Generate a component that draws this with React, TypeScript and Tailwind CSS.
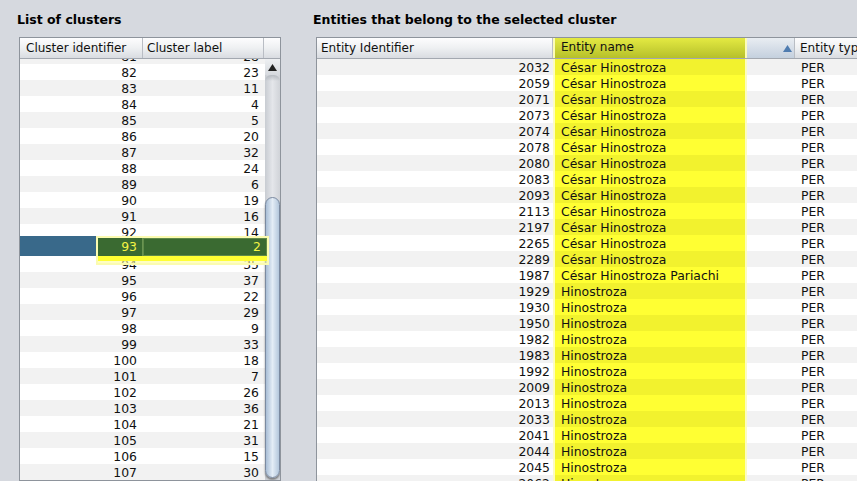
import React from 'react';

const clusters: [number, number][] = [
  [81, 28], [82, 23], [83, 11], [84, 4], [85, 5], [86, 20], [87, 32], [88, 24], [89, 6],
  [90, 19], [91, 16], [92, 14], [93, 2], [94, 35], [95, 37], [96, 22], [97, 29], [98, 9],
  [99, 33], [100, 18], [101, 7], [102, 26], [103, 36], [104, 21], [105, 31], [106, 15],
  [107, 30], [108, 12],
];

const cesar = [2032, 2059, 2071, 2073, 2074, 2078, 2080, 2083, 2093, 2113, 2197, 2265, 2289];
const hino = [1929, 1930, 1950, 1982, 1983, 1992, 2009, 2013, 2033, 2041, 2044, 2045, 2062];

const entities: [number, string][] = [
  ...cesar.map(id => [id, 'César Hinostroza'] as [number, string]),
  [1987, 'César Hinostroza Pariachi'],
  ...hino.map(id => [id, 'Hinostroza'] as [number, string]),
];

const headerBg = 'bg-gradient-to-b from-[#fdfdfe] via-[#eef0f2] to-[#d9dce1]';

const ClusterTable: React.FC = () => (
  <div className="w-[262px] border border-[#8e949c] bg-white">
    <div className={`flex h-[21px] border-b border-[#a3a8b0] text-[12px] ${headerBg}`}>
      <div className="w-[123px] border-r border-[#b9bdc4] pl-[6px] leading-[21px]">Cluster identifier</div>
      <div className="w-[121px] border-r border-[#b9bdc4] pl-[4px] leading-[21px]">Cluster label</div>
      <div className="flex-1" />
    </div>
    <div className="relative flex h-[421px] overflow-hidden">
      <div className="w-[245px]">
        <div className="-mt-[11px]">
          {clusters.map(([id, label], i) => {
            const sel = id === 93;
            return (
              <div
                key={id}
                className={`flex h-[16px] leading-[17px] ${sel ? 'bg-[#39698a]' : i % 2 === 0 ? 'bg-[#f2f2f2]' : 'bg-white'}`}
              >
                <div className="w-[123px] pr-[6px] text-right">{sel ? '' : id}</div>
                <div className="w-[122px] pr-[6px] text-right">{sel ? '' : label}</div>
              </div>
            );
          })}
        </div>
      </div>
      <div className="relative w-[15px] bg-gradient-to-r from-[#c8ccd2] via-[#e4e6ea] to-[#d0d3d8]">
        <div className="flex h-[16px] items-center justify-center bg-gradient-to-b from-[#eef0f2] to-[#d6d9de]">
          <svg width="9" height="7" viewBox="0 0 9 7">
            <path d="M4.5 0 L9 7 L0 7 Z" fill="#222" />
          </svg>
        </div>
        <div className="h-[6px] rounded-t-[6px] bg-gradient-to-b from-[#9aa0a8] to-transparent opacity-60" />
        <div className="absolute left-0 top-[138px] h-[281px] w-[15px] rounded-[8px] border border-[#7b8aa0] bg-gradient-to-r from-[#a9bed6] via-[#e4edf6] to-[#b4c7dc] shadow-[0_2px_2px_rgba(0,0,0,0.45)]" />
      </div>
      <div className="absolute left-[-1px] top-[177px] h-[20px] w-[77px] bg-[#39698a]" />
      <div className="absolute left-[76px] top-[177px] h-[29px] w-[173px] border-[2px] border-[#fbfbb0] bg-[#fdfd9a]/60">
        <div className="flex h-[18px] bg-[#3a6a31] leading-[18px] text-[#f4f444]">
          <div className="w-[45px] border-r border-[#6a9452] pr-[5px] text-right">93</div>
          <div className="flex-1 border border-[#5f8a48] pr-[5px] text-right leading-[16px]">2</div>
        </div>
        <div className="h-[5px] bg-[#ffff33]" />
      </div>
    </div>
  </div>
);

const EntityTable: React.FC = () => (
  <div className="w-[600px] border border-[#8e949c] bg-white">
    <div className={`flex h-[21px] border-b border-[#a3a8b0] text-[12px] ${headerBg}`}>
      <div className="w-[236px] border-r border-[#b9bdc4] pl-[4px] leading-[21px]">Entity Identifier</div>
      <div className="w-[194px] border-x-[2px] border-[#fcfcb8] bg-gradient-to-b from-[#e4ea42] to-[#b6c02a] pl-[6px] leading-[19px]">
        Entity name
      </div>
      <div className="flex w-[48px] items-center justify-end border-r border-[#b9bdc4] bg-gradient-to-b from-[#e9edf2] to-[#c4d0de] pr-[2px]">
        <svg width="9" height="7" viewBox="0 0 9 7">
          <path d="M4.5 0 L9 7 L0 7 Z" fill="#4f7cb0" />
        </svg>
      </div>
      <div className="flex-1 pl-[5px] leading-[21px]">Entity type</div>
    </div>
    <div className="h-[430px] overflow-hidden">
      {entities.map(([id, name], i) => {
        const odd = i % 2 === 0;
        return (
          <div key={id} className={`flex h-[16px] leading-[17px] ${odd ? 'bg-[#f2f2f2]' : 'bg-white'}`}>
            <div className="w-[236px] pr-[3px] text-right">{id}</div>
            <div
              className={`w-[194px] border-x-[2px] border-[#fcfcc0] pl-[6px] ${odd ? 'bg-[#f2f22e]' : 'bg-[#ffff33]'}`}
            >
              {name}
            </div>
            <div className="w-[48px]" />
            <div className="flex-1 pl-[6px]">PER</div>
          </div>
        );
      })}
    </div>
  </div>
);

export default function App() {
  return (
    <div
      className="flex h-[481px] w-[857px] overflow-hidden bg-[#d6d9df] text-[12.4px] text-[#111]"
      style={{ fontFamily: '"DejaVu Sans", sans-serif' }}
    >
      <div className="w-[281px] shrink-0 pl-[17px]">
        <div className="h-[37px] pt-[12px] text-[12.5px] font-bold leading-[16px] text-black">List of clusters</div>
        <div className="ml-[2px]">
          <ClusterTable />
        </div>
      </div>
      <div className="shrink-0 pl-[32px]">
        <div className="h-[37px] pt-[12px] text-[12.5px] font-bold leading-[16px] text-black">
          Entities that belong to the selected cluster
        </div>
        <div className="ml-[3px]">
          <EntityTable />
        </div>
      </div>
    </div>
  );
}
